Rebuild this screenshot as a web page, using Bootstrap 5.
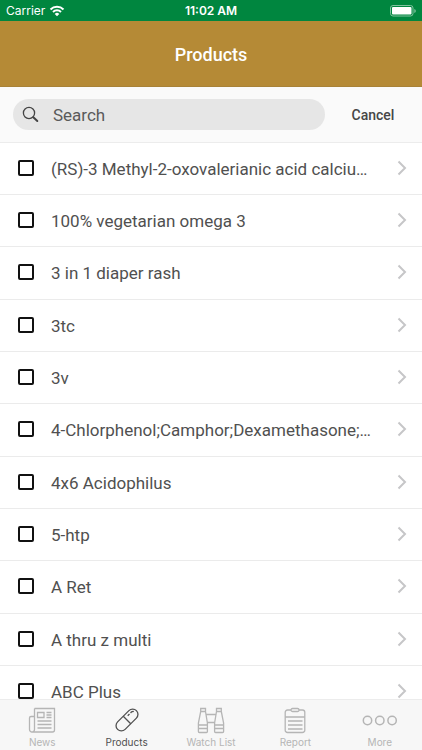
<!DOCTYPE html>
<html lang="en">
<head>
<meta charset="utf-8">
<meta name="viewport" content="width=device-width, initial-scale=1">
<title>Products</title>
<link rel="stylesheet" href="https://cdn.jsdelivr.net/npm/bootstrap@5.3.0/dist/css/bootstrap.min.css">
<style>
  body { font-family: Roboto, "Liberation Sans", sans-serif; color: #505050; background: #fff; }
  .status-bar { background: #00863f; color: #fff; height: 21px; padding: 1px 6px 0; font-family: Inter, sans-serif; font-size: 12px; line-height: 20px; }
  .status-time { font-weight: 600; }
  .title-bar { background: #b58a36; color: #fff; height: 66px; padding-top: 2px; border-bottom: 1px solid #a88238; }
  .title-bar h1 { font-size: 18px; line-height: 24px; font-weight: 500; }
  .search-bar { background: #fafafa; height: 56px; padding: 0 12px 0 13px; border-bottom: 1px solid #ececec; }
  .search-field { background: #e6e6e6; height: 31px; padding-left: 9px; gap: 14px; }
  .search-field input { font-size: 17px; line-height: 24px; padding: 0; color: #505050; }
  .search-field input::placeholder { color: #5a5a5a; opacity: 1; }
  .search-field input:focus { outline: 0; }
  .cancel-btn { font-size: 14px; line-height: 20px; font-weight: 500; color: #464646; width: 72px; margin-left: 13px; padding: 1px 2px 0 0; }
  .product-list { min-height: 0; }
  .product-row { height: 52px; padding: 0 15px 0 18px; gap: 17px; border-bottom: 1px solid #ebebeb; flex-shrink: 0; }
  .product-row:nth-child(3n) { height: 53px; }
  .product-row input { appearance: none; width: 16px; height: 16px; border: 2px solid #111; border-radius: 2px; background: #fff; margin: 0 0 2px; flex-shrink: 0; }
  .product-row input:checked { background: #111; }
  .product-row label { font-size: 17px; line-height: 24px; }
  .chevron { margin-bottom: 2px; }
  .tab-bar { background: #f7f7f7; border-top: 1px solid #ececec; height: 51px; font-family: Inter, sans-serif; }
  .tab-link { flex: 1 1 0; color: #b5b5b5; font-size: 10px; line-height: 12px; padding-top: 6px; gap: 2px; }
  .tab-link.active { color: #505050; }
  svg { display: block; flex-shrink: 0; fill: none; stroke: currentColor; }
</style>
<script src="https://cdn.jsdelivr.net/npm/bootstrap@5.3.0/dist/js/bootstrap.bundle.min.js"></script>
</head>
<body>
<svg class="d-none" aria-hidden="true">
  <symbol id="chevron" viewBox="0 0 10 16"><path d="M1.500 1.500 8 8l-6.500 6.500" fill="none" stroke="#c6c6c8" stroke-width="2"/></symbol>
</svg>
<div class="d-flex flex-column vh-100 overflow-hidden">
  <div class="status-bar row g-0 flex-shrink-0">
    <div class="col d-flex align-items-center gap-1">
      <span>Carrier</span>
      <svg width="16" height="12" viewBox="0 0 16 12" aria-label="Wi-Fi"><path d="M1.500 4.500a9.200 9.200 0 0 1 13 0M4 7a5.700 5.700 0 0 1 8 0" stroke-width="2"/><path d="M8 11.300 5.700 9a3.200 3.200 0 0 1 4.600 0z" fill="#fff" stroke="none"/></svg>
    </div>
    <div class="col-auto status-time">11:02 AM</div>
    <div class="col d-flex align-items-center justify-content-end">
      <svg width="27" height="12" viewBox="0 0 27 12" aria-label="Battery"><rect x="1.500" y=".5" width="22.500" height="10.500" rx="2.500" stroke="#80c39f"/><rect x="3" y="2" width="19.500" height="7.500" rx="1" fill="#fff" stroke="none"/><path d="M25.300 4v4q1.500-.7 1.500-2t-1.500-2z" fill="#80c39f" stroke="none"/></svg>
    </div>
  </div>
  <header class="title-bar d-flex align-items-center justify-content-center flex-shrink-0"><h1 class="m-0">Products</h1></header>
  <form class="search-bar d-flex align-items-center flex-shrink-0" role="search">
    <div class="search-field d-flex align-items-center flex-grow-1 rounded-pill">
      <svg width="17" height="17" viewBox="0 0 17 17" stroke-linecap="round" aria-hidden="true"><circle cx="7" cy="7" r="5.600" stroke="#444" stroke-width="1.300"/><path d="m11.300 11.300 4 3.700" stroke="#444" stroke-width="2"/></svg>
      <input class="border-0 bg-transparent flex-grow-1 w-50" type="text" placeholder="Search" aria-label="Search">
    </div>
    <button class="cancel-btn btn border-0" type="button">Cancel</button>
  </form>
  <main class="product-list flex-grow-1 overflow-hidden d-flex flex-column">
    <div class="product-row d-flex align-items-center"><input type="checkbox" id="p1"><label class="flex-grow-1 text-nowrap" for="p1">(RS)-3 Methyl-2-oxovalerianic acid calciu…</label><svg class="chevron" width="10" height="16"><use href="#chevron"/></svg></div>
    <div class="product-row d-flex align-items-center"><input type="checkbox" id="p2"><label class="flex-grow-1 text-nowrap" for="p2">100% vegetarian omega 3</label><svg class="chevron" width="10" height="16"><use href="#chevron"/></svg></div>
    <div class="product-row d-flex align-items-center"><input type="checkbox" id="p3"><label class="flex-grow-1 text-nowrap" for="p3">3 in 1 diaper rash</label><svg class="chevron" width="10" height="16"><use href="#chevron"/></svg></div>
    <div class="product-row d-flex align-items-center"><input type="checkbox" id="p4"><label class="flex-grow-1 text-nowrap" for="p4">3tc</label><svg class="chevron" width="10" height="16"><use href="#chevron"/></svg></div>
    <div class="product-row d-flex align-items-center"><input type="checkbox" id="p5"><label class="flex-grow-1 text-nowrap" for="p5">3v</label><svg class="chevron" width="10" height="16"><use href="#chevron"/></svg></div>
    <div class="product-row d-flex align-items-center"><input type="checkbox" id="p6"><label class="flex-grow-1 text-nowrap" for="p6">4-Chlorphenol;Camphor;Dexamethasone;…</label><svg class="chevron" width="10" height="16"><use href="#chevron"/></svg></div>
    <div class="product-row d-flex align-items-center"><input type="checkbox" id="p7"><label class="flex-grow-1 text-nowrap" for="p7">4x6 Acidophilus</label><svg class="chevron" width="10" height="16"><use href="#chevron"/></svg></div>
    <div class="product-row d-flex align-items-center"><input type="checkbox" id="p8"><label class="flex-grow-1 text-nowrap" for="p8">5-htp</label><svg class="chevron" width="10" height="16"><use href="#chevron"/></svg></div>
    <div class="product-row d-flex align-items-center"><input type="checkbox" id="p9"><label class="flex-grow-1 text-nowrap" for="p9">A Ret</label><svg class="chevron" width="10" height="16"><use href="#chevron"/></svg></div>
    <div class="product-row d-flex align-items-center"><input type="checkbox" id="p10"><label class="flex-grow-1 text-nowrap" for="p10">A thru z multi</label><svg class="chevron" width="10" height="16"><use href="#chevron"/></svg></div>
    <div class="product-row d-flex align-items-center"><input type="checkbox" id="p11"><label class="flex-grow-1 text-nowrap" for="p11">ABC Plus</label><svg class="chevron" width="10" height="16"><use href="#chevron"/></svg></div>
  </main>
  <nav class="tab-bar d-flex flex-shrink-0" aria-label="Main">
    <a class="tab-link d-flex flex-column align-items-center text-decoration-none" href="#news">
      <svg width="28" height="28" viewBox="0 0 28 28" stroke-width="1.300" aria-hidden="true"><path d="M6.500 2.500h20v21.500a2 2 0 0 1-2 2H4a2.500 2.500 0 0 1-2.500-2.500V12q0-1.500 1.500-1.500h3.500M6.500 2.500V23.500A2.500 2.500 0 0 1 4 26"/><path d="M9.500 6.500h6.500v5H9.500zM18.500 6.500h5M18.500 9h5M18.500 11.500h5M9.500 15h14M9.500 18.500h14M9.500 22h14"/></svg>
      <span>News</span></a>
    <a class="tab-link active d-flex flex-column align-items-center text-decoration-none" href="#products" aria-current="page">
      <svg width="28" height="28" viewBox="0 0 28 28" stroke-width="1.300" aria-hidden="true"><g transform="rotate(-45 14 14)"><rect x="0.700" y="8.700" width="26.600" height="10.600" rx="5.300"/><path d="M14 8.700v10.600M17.500 11.500h2.500M21.500 11.500h1.500q1.300.3 1.800 1.300"/></g></svg>
      <span>Products</span></a>
    <a class="tab-link d-flex flex-column align-items-center text-decoration-none" href="#watch-list">
      <svg width="28" height="28" viewBox="0 0 28 28" stroke-width="1.300" aria-hidden="true"><path d="M3.700 2.500h4.800V5.500H3.700zM3.700 5.500 1.400 17v8.500q0 1 1 1h7q1 0 1-1V17L8.500 5.500M1.400 19h9M1.400 22.500h9M24.300 2.500h-4.800V5.500h4.800zM24.300 5.500 26.600 17v8.500q0 1-1 1h-7q-1 0-1-1V17l1.900-11.500M26.600 19h-9M26.600 22.500h-9M9 8.500h10M10.400 16.500h7.200"/></svg>
      <span>Watch List</span></a>
    <a class="tab-link d-flex flex-column align-items-center text-decoration-none" href="#report">
      <svg width="28" height="28" viewBox="0 0 28 28" stroke-width="1.300" aria-hidden="true"><path d="M10 4H6.500A2.300 2.300 0 0 0 4.200 6.300v17.900a2.300 2.300 0 0 0 2.300 2.300h15a2.300 2.300 0 0 0 2.300-2.300V6.300A2.300 2.300 0 0 0 21.500 4H18"/><path d="M11.500 2.500h5q1.500 0 1.500 1.500t-1.500 1.500h-5q-1.500 0-1.500-1.500t1.500-1.500zM4.200 11h19.600M7 15h14.500M7 19h14.500M7 23h14.500"/></svg>
      <span>Report</span></a>
    <a class="tab-link d-flex flex-column align-items-center text-decoration-none" href="#more">
      <svg width="36" height="28" viewBox="0 0 36 28" stroke-width="1.500" aria-hidden="true"><circle cx="5.500" cy="14.500" r="4.200"/><circle cx="17.800" cy="14.500" r="4.200"/><circle cx="30.100" cy="14.500" r="4.200"/></svg>
      <span>More</span></a>
  </nav>
</div>
</body>
</html>
